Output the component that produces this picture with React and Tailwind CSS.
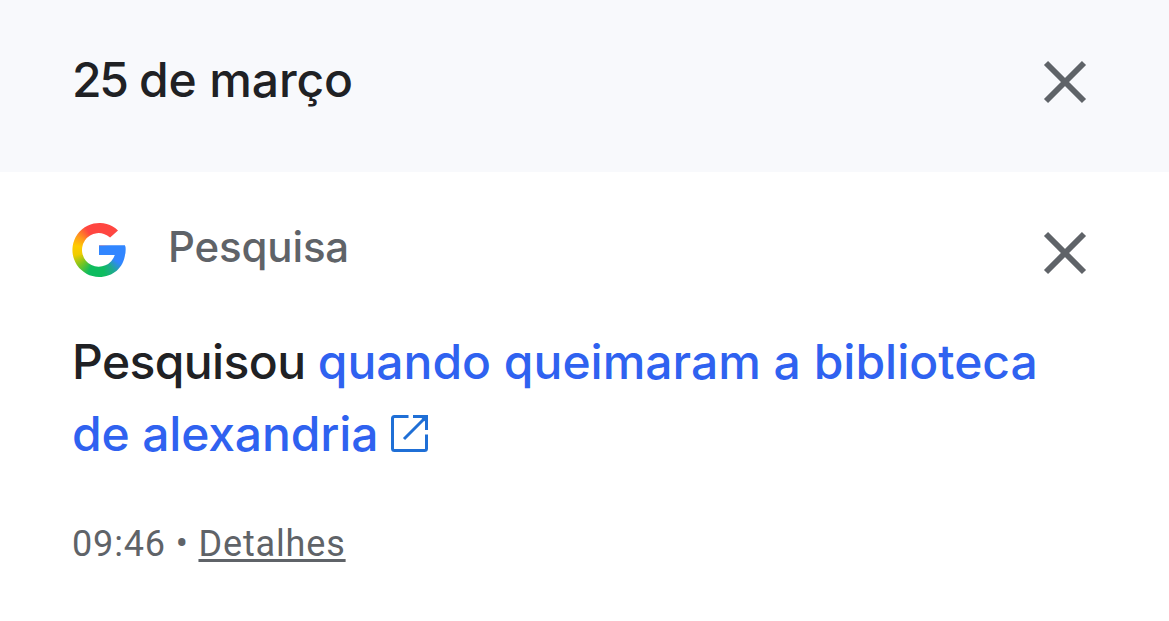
function CloseIcon() {
  return (
    <svg className="block size-[44px]" viewBox="0 0 44 44" fill="none" stroke="#5f6368" strokeWidth="5.8">
      <path d="M3 3 41 41M41 3 3 41" />
    </svg>
  );
}

function GoogleLogo() {
  return (
    <div
      className="h-[54px] w-[54px] shrink-0 bg-[linear-gradient(#3186ff,#3186ff),conic-gradient(from_0deg_at_50%_50%,#ff4641_0deg,#ff4641_42deg,#3186ff_70deg,#3186ff_122deg,#1fa98f_145deg,#0ebc5f_168deg,#0ebc5f_205deg,#7cc520_232deg,#f0cc00_258deg,#ffcc00_280deg,#ff9a1c_303deg,#ff4641_330deg,#ff4641_360deg)] bg-[length:28px_10px,100%_100%] bg-[position:26px_22px,0_0] bg-no-repeat [clip-path:path('M46_7.4L38.1_14.5A16.8_16.8_0_1_0_42.8_32H27V22.4H53C53.4_24_53.5_25.5_53.4_27C53.4_43_42.5_54_27_54A27_27_0_1_1_46_7.4Z')]"
    />
  );
}

function ExternalIcon() {
  return (
    <svg className="ml-[13px] inline-block size-[37px] align-[-1px]" viewBox="0 0 37 37" fill="none" stroke="#1f6fd6" strokeWidth="3">
      <path d="M17.5 1.5H3.5Q1.5 1.5 1.5 3.5V33.5Q1.5 35.5 3.5 35.5H33.5Q35.5 35.5 35.5 33.5V19.5M22 1.5H35.5V15M34.5 2.5 13 24" />
      <path d="M29 1.5H35.5V8Z" fill="#1f6fd6" stroke="none" />
    </svg>
  );
}

export default function App() {
  return (
    <main className="h-[621px] w-[1169px] overflow-hidden bg-white font-['Inter',sans-serif] text-[#202124]">
      <header className="flex h-[172px] items-start justify-between bg-[#f8f9fc] pl-[72px] pr-[82px] pt-[50px]">
        <h1 className="text-[48px] leading-[60px] font-medium">
          <span className="tracking-[-2.4px]">25</span>
          <span className="tracking-[-0.15px]"> de março</span>
        </h1>
        <button aria-label="Excluir dia" className="mt-[10px]"><CloseIcon /></button>
      </header>
      <section className="pl-[72px] pr-[82px] pt-[50px]">
        <div className="flex h-[56px] items-start">
          <div className="mt-[1px]"><GoogleLogo /></div>
          <span className="ml-[42px] text-[42px] leading-[50px] font-medium tracking-[-0.15px] text-[#5f6368]">Pesquisa</span>
          <button aria-label="Excluir item" className="mt-[9px] ml-auto"><CloseIcon /></button>
        </div>
        <p className="mt-[48px] text-[48px] leading-[72px] font-medium whitespace-nowrap">
          <span className="tracking-[-0.6px]">Pesquisou </span>
          <a className="text-[#2f62f0]">quando queimaram a biblioteca<br /><span className="tracking-[-0.15px]">de alexandria</span><ExternalIcon /></a>
        </p>
        <div className="mt-[53px] flex font-['Roboto',sans-serif] text-[36px] leading-[42px] tracking-[0.85px] text-[#5f6368]">
          <span className="whitespace-pre">09:46 • </span>
          <a className="underline decoration-[3px] underline-offset-[3px]">Detalhes</a>
        </div>
      </section>
    </main>
  );
}
